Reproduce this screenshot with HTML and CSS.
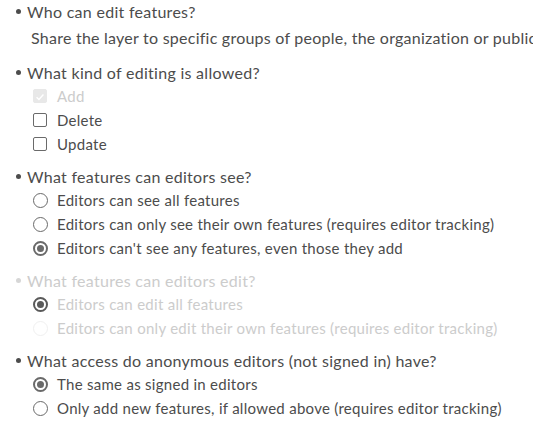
FILE: index.html
```html
<!DOCTYPE html>
<html>
<head>
<meta charset="utf-8">
<link rel="stylesheet" href="styles.css">
</head>
<body>
<div class="settings">
  <section class="group">
    <div class="question"><span class="dot"></span>Who can edit features?</div>
    <div class="desc">Share the layer to specific groups of people, the organization or public.</div>
  </section>

  <section class="group">
    <div class="question"><span class="dot"></span>What kind of editing is allowed?</div>
    <label class="option disabled"><span class="box checked"><svg viewBox="0 0 14 14" width="14" height="14"><path d="M3 7.2 L5.8 10 L11 4" fill="none" stroke="#fff" stroke-width="1.6"/></svg></span>Add</label>
    <label class="option"><span class="box"></span>Delete</label>
    <label class="option"><span class="box"></span>Update</label>
  </section>

  <section class="group">
    <div class="question"><span class="dot"></span>What features can editors see?</div>
    <label class="option"><span class="radio"></span>Editors can see all features</label>
    <label class="option"><span class="radio"></span>Editors can only see their own features (requires editor tracking)</label>
    <label class="option"><span class="radio on"></span>Editors can't see any features, even those they add</label>
  </section>

  <section class="group disabled-group">
    <div class="question"><span class="dot"></span>What features can editors edit?</div>
    <label class="option"><span class="radio on"></span>Editors can edit all features</label>
    <label class="option"><span class="radio faint"></span>Editors can only edit their own features (requires editor tracking)</label>
  </section>

  <section class="group">
    <div class="question"><span class="dot"></span>What access do anonymous editors (not signed in) have?</div>
    <label class="option"><span class="radio on"></span>The same as signed in editors</label>
    <label class="option"><span class="radio"></span>Only add new features, if allowed above (requires editor tracking)</label>
  </section>
</div>
</body>
</html>
```
FILE: styles.css
```css
html, body {
  margin: 0;
  padding: 0;
  background: #fff;
}
body {
  font-family: Lato, "Noto Sans", sans-serif;
  font-size: 15px;
  letter-spacing: 0.28px;
  color: #4c4c4c;
  overflow: hidden;
}
.settings {
  padding: 0 0 0 16px;
  width: 600px;
}
.group {
  margin-bottom: 9px;
}
.question {
  display: flex;
  align-items: center;
  height: 23px;
  font-size: 16px;
  white-space: nowrap;
}
.dot {
  width: 5px;
  height: 5px;
  border-radius: 50%;
  background: #4c4c4c;
  margin-right: 6px;
  flex: none;
}
.desc {
  height: 24px;
  line-height: 24px;
  font-size: 16px;
  letter-spacing: 0.24px;
  padding-left: 15px;
  white-space: nowrap;
  margin: 3px 0 11px;
}
.option {
  display: flex;
  align-items: center;
  height: 24px;
  padding-left: 17px;
  white-space: nowrap;
}
.box {
  width: 14px;
  height: 14px;
  box-sizing: border-box;
  border: 1px solid #6a6a6a;
  border-radius: 2px;
  margin-right: 10px;
  flex: none;
  display: flex;
}
.box.checked {
  border-color: #e8e8e8;
  background: #e8e8e8;
}
.radio {
  width: 15px;
  height: 15px;
  box-sizing: border-box;
  border: 1px solid #6a6a6a;
  border-radius: 50%;
  margin-right: 9px;
  flex: none;
  position: relative;
}
.radio.on {
  border: 2px solid #6a6a6a;
}
.radio.on::after {
  content: "";
  position: absolute;
  left: 2px;
  top: 2px;
  width: 7px;
  height: 7px;
  border-radius: 50%;
  background: #6a6a6a;
}
.disabled,
.disabled-group {
  color: #cccccc;
}
.disabled-group .dot {
  background: #d6d6d6;
}
.disabled-group .radio.on {
  border-color: #5a5a5a;
}
.disabled-group .radio.on::after {
  background: #5a5a5a;
}
.radio.faint {
  border-color: #f0f0f0;
}
```
